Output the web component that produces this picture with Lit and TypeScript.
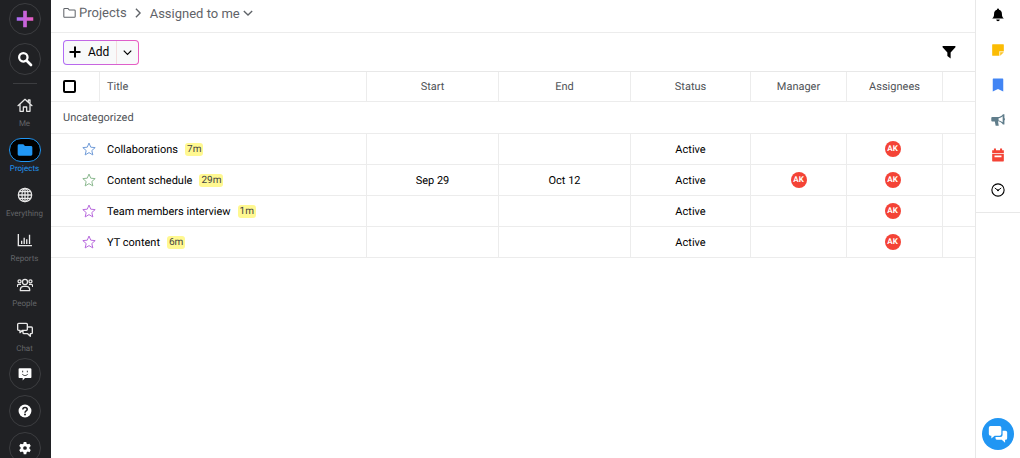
import { LitElement, html, css, svg, nothing, type TemplateResult } from "lit";
import { customElement, property } from "lit/decorators.js";
import { classMap } from "lit/directives/class-map.js";

const shapes: Record<string, TemplateResult> = {
  plus: svg`<defs><linearGradient id="pg" x1="0" x2="1" y1="0" y2="0"><stop offset="0" stop-color="#a66cf5"/><stop offset="1" stop-color="#ea5cc0"/></linearGradient></defs>
    <path fill="url(#pg)" d="M10 3h4v7h7v4h-7v7h-4v-7H3v-4h7z"/>`,
  add: svg`<path fill="currentColor" d="M10 1h4v9h9v4h-9v9h-4v-9H1v-4h9z"/>`,
  search: svg`<g fill="none" stroke="currentColor" stroke-width="3.400"><circle cx="9.500" cy="9.500" r="6.300"/><path stroke-width="4" stroke-linecap="round" d="M15 15l6 6"/></g>`,
  home: svg`<path fill="none" stroke="currentColor" stroke-width="1.900" stroke-linejoin="round" stroke-linecap="round" d="M1.500 13L12 3.500 22.500 13M4.500 11V21.500h5V15h5v6.500h5V11M17 7.500V4.500h2.500v5"/>`,
  folder: svg`<path fill="currentColor" d="M1 5.500a2 2 0 0 1 2-2h6.500l2.500 2.500H21a2 2 0 0 1 2 2V18.500a2 2 0 0 1-2 2H3a2 2 0 0 1-2-2z"/>`,
  folderLine: svg`<path fill="none" stroke="currentColor" stroke-width="1.900" stroke-linejoin="round" d="M1.500 5A1.500 1.500 0 0 1 3 3.500h6l2.500 3H21A1.500 1.500 0 0 1 22.500 8v10.500A1.500 1.500 0 0 1 21 20H3a1.500 1.500 0 0 1-1.500-1.500z"/>`,
  globe: svg`<g fill="none" stroke="currentColor" stroke-width="1.900"><circle cx="12" cy="12" r="10"/><ellipse cx="12" cy="12" rx="4.500" ry="10"/><path d="M12 2v20M2 12h20M3.500 7h17M3.500 17h17"/></g>`,
  chart: svg`<path fill="none" stroke="currentColor" stroke-width="2" d="M2 3v17.500h20.500M7 18v-5M10.800 18V8.500M14.600 18v-7M18.800 18V4"/>`,
  people: svg`<g fill="none" stroke="currentColor" stroke-width="1.900"><circle cx="12" cy="7.500" r="3.800"/><circle cx="3.800" cy="6.500" r="2.300"/><circle cx="20.200" cy="6.500" r="2.300"/><path stroke-linejoin="round" d="M5 20.500v-2a5 5 0 0 1 5-4.500h4a5 5 0 0 1 5 4.500v2zM.500 15v-1.500A2.500 2.500 0 0 1 3 11h3M23.500 15v-1.500A2.500 2.500 0 0 0 21 11h-3"/></g>`,
  chat: svg`<path fill="none" stroke="currentColor" stroke-width="2" stroke-linejoin="round" d="M2.500 2H14a1.500 1.500 0 0 1 1.500 1.500V11a1.500 1.500 0 0 1-1.500 1.500H8L4.500 16v-3.500h-2A1.500 1.500 0 0 1 1 11V3.500A1.500 1.500 0 0 1 2.500 2zM15.500 7.500h6A1.500 1.500 0 0 1 23 9v7a1.500 1.500 0 0 1-1.500 1.500H20V21.500l-4-4h-5.500A1.500 1.500 0 0 1 9 16v-3.500"/>`,
  feedback: svg`<path fill="currentColor" d="M3 2h18a2 2 0 0 1 2 2v13a2 2 0 0 1-2 2H12l-4 4v-4H3a2 2 0 0 1-2-2V4a2 2 0 0 1 2-2z"/><path fill="none" stroke="#202124" stroke-width="1.500" stroke-linecap="round" d="M8 7v1.500M16 7v1.500M7.500 12.500c2 3 7 3 9 0"/>`,
  help: svg`<circle cx="12" cy="12" r="11" fill="currentColor"/><path fill="none" stroke="#202124" stroke-width="2.700" d="M8.300 9.500c0-5 7.500-4.500 7.500-.5 0 2.800-3.800 2.700-3.800 5.800"/><circle cx="12" cy="18" r="1.700" fill="#202124"/>`,
  gear: svg`<path fill="currentColor" d="M9.800 1.500h4.400l.6 3 2 1.200 2.900-1 2.200 3.800-2.300 2v2.900l2.300 2-2.200 3.800-2.900-1-2 1.200-.6 3.100H9.800l-.6-3.100-2-1.200-2.900 1-2.200-3.800 2.300-2v-2.900l-2.300-2 2.200-3.800 2.900 1 2-1.200z"/><circle cx="12" cy="12" r="3.200" fill="#202124"/>`,
  right: svg`<path fill="none" stroke="currentColor" stroke-width="3.200" d="M7 2l10 10L7 22"/>`,
  down: svg`<path fill="none" stroke="currentColor" stroke-width="3.200" d="M2 7l10 10L22 7"/>`,
  filter: svg`<path fill="currentColor" d="M1 1.500h22v2.500L14.800 13v10L9.200 19v-6L1 4z"/>`,
  star: svg`<path fill="none" stroke="currentColor" stroke-width="1.700" stroke-linejoin="round" d="M12 1.800l3 7.100 7.600.7-5.800 5.100 1.800 7.500-6.600-4-6.600 4 1.800-7.500-5.800-5.100 7.600-.7z"/>`,
  bell: svg`<path fill="currentColor" d="M12 1a1.800 1.800 0 0 1 1.800 1.800c3.200.8 4.900 3.400 4.900 6.900 0 4.500 1.300 6 3.300 8.300H2c2-2.300 3.300-3.800 3.300-8.300 0-3.500 1.700-6.100 4.900-6.900A1.800 1.800 0 0 1 12 1zM9 19.500h6a3 3 0 0 1-6 0z"/>`,
  note: svg`<path fill="currentColor" d="M3 2h18a1 1 0 0 1 1 1v11.500L14.500 22H3a1 1 0 0 1-1-1V3a1 1 0 0 1 1-1z"/><path fill="#fff" opacity=".8" d="M14 14h8v1.500L15.500 22H14z"/><path fill="#fbc52c" d="M15.800 15.800H22L15.800 22z"/>`,
  bookmark: svg`<path fill="currentColor" d="M4 1h16a1 1 0 0 1 1 1v21l-9-4-9 4V2a1 1 0 0 1 1-1z"/>`,
  horn: svg`<path fill="currentColor" fill-rule="evenodd" d="M2 7h9c4 0 7.500-2 9.500-5H23v6.500c1.300.6 1.300 3.900 0 4.500v6.500h-2.500c-2-2.800-5.500-5-8.500-5.300L13.300 22H8l-1.500-7.500H2A1.500 1.500 0 0 1 .500 13V8.500A1.500 1.500 0 0 1 2 7zM13 9v4c3 .4 5 1.500 7 3V5.500C18 7.500 16 8.600 13 9z"/>`,
  calendar: svg`<path fill="currentColor" fill-rule="evenodd" d="M5 1h3.500v3h7V1H19v3h3v4.500H2V4h3zM2 10h20V22a1 1 0 0 1-1 1H3a1 1 0 0 1-1-1zM6 13v3h12v-3z"/>`,
  clock: svg`<circle cx="12" cy="12" r="10.500" fill="none" stroke="currentColor" stroke-width="1.900"/><path fill="none" stroke="currentColor" stroke-width="1.600" d="M6.500 8.500l5.500 4.300 5.500-4.300"/><circle cx="12" cy="12.500" r="1.600" fill="currentColor"/>`,
  chatSolid: svg`<path fill="currentColor" d="M3 2.500h11a2 2 0 0 1 2 2V12a2 2 0 0 1-2 2H8l-4 3.500V14H3a2 2 0 0 1-2-2V4.500a2 2 0 0 1 2-2z"/><path fill="currentColor" d="M17.500 8H21a2 2 0 0 1 2 2v7a2 2 0 0 1-2 2h-.5v3.500l-4-3.500H11a2 2 0 0 1-2-2v-1.500h5.500a3 3 0 0 0 3-3z"/>`,
};

@customElement("ui-icon")
class UiIcon extends LitElement {
  @property() name = "";
  static styles = css`
    :host { display: block; flex: none; width: 16px; height: 16px; }
    svg { display: block; width: 100%; height: 100%; }
  `;
  render() {
    return html`<svg viewBox="0 0 24 24" aria-hidden="true">${shapes[this.name] ?? nothing}</svg>`;
  }
}

@customElement("side-nav")
class SideNav extends LitElement {
  static styles = css`
    :host { display: block; overflow: hidden; background: #202124; color: #fff; }
    .bar { display: flex; flex-direction: column; align-items: center; padding: 3px 2px 0 0; }
    button { padding: 0; border: 0; background: none; color: inherit; font: inherit; cursor: pointer; }
    .round { display: grid; place-items: center; flex: none; box-sizing: border-box; width: 32px; height: 32px; border: 1px solid #3c3d40; border-radius: 50%; }
    .top, .bottom { display: flex; flex-direction: column; }
    .top { gap: 8px; }
    .bottom { gap: 5px; margin-top: 3px; }
    .create { width: 22px; height: 22px; }
    .find { width: 16px; height: 16px; }
    .small { width: 14px; height: 14px; }
    .rule { width: 24px; height: 1px; margin: 8px 0 9px; border: 0; background: #3c3d40; }
    nav { display: flex; flex-direction: column; gap: 8px; }
    .item { display: flex; flex-direction: column; align-items: center; gap: 1px; color: #636568; font-size: 8px; line-height: 12px; text-decoration: none; }
    .pill { display: grid; place-items: center; box-sizing: border-box; width: 32px; height: 24px; border-radius: 12px; color: #e8e8e8; }
    .active { color: #2196f3; }
    .active .pill { border: 1px solid #2196f3; background: #000; color: #2196f3; }
  `;
  items = [
    ["home", "Me"], ["folder", "Projects"], ["globe", "Everything"],
    ["chart", "Reports"], ["people", "People"], ["chat", "Chat"],
  ];
  render() {
    return html`<div class="bar">
      <div class="top">
        <button class="round" aria-label="Create"><ui-icon class="create" name="plus"></ui-icon></button>
        <button class="round" aria-label="Search"><ui-icon class="find" name="search"></ui-icon></button>
      </div>
      <hr class="rule" />
      <nav>
        ${this.items.map(([icon, label]) => html`
          <a href="#" class=${classMap({ item: true, active: label === "Projects" })}>
            <span class="pill"><ui-icon name=${icon}></ui-icon></span><span>${label}</span>
          </a>`)}
      </nav>
      <div class="bottom">
        <button class="round" aria-label="Feedback"><ui-icon class="small" name="feedback"></ui-icon></button>
        <button class="round" aria-label="Help"><ui-icon class="small" name="help"></ui-icon></button>
        <button class="round" aria-label="Settings"><ui-icon class="small" name="gear"></ui-icon></button>
      </div>
    </div>`;
  }
}

@customElement("tool-rail")
class ToolRail extends LitElement {
  static styles = css`
    :host { display: flex; flex-direction: column; border-left: 1px solid #e8e8e8; }
    .tools { display: flex; flex-direction: column; align-items: center; gap: 21px; padding: 8px 0 15px; border-bottom: 1px solid #e8e8e8; }
    button { padding: 0; border: 0; background: none; color: #000; cursor: pointer; }
    .tool ui-icon { width: 14px; height: 14px; }
    .note { color: #fbbc04; }
    .bookmark { color: #4285f4; }
    .horn { color: #607d8b; }
    .calendar { color: #f44336; }
    .help { display: grid; place-items: center; width: 32px; height: 32px; margin: auto auto 8px; border-radius: 50%; background: #2196f3; color: #fff; }
    .help ui-icon { width: 20px; height: 20px; }
  `;
  tools = ["bell", "note", "bookmark", "horn", "calendar", "clock"];
  render() {
    return html`
      <div class="tools">
        ${this.tools.map((t) => html`<button class="tool ${t}" aria-label=${t}><ui-icon name=${t}></ui-icon></button>`)}
      </div>
      <button class="help" aria-label="Support chat"><ui-icon name="chatSolid"></ui-icon></button>`;
  }
}

interface Project {
  title: string;
  age: string;
  tone: string;
  start?: string;
  end?: string;
  manager?: string;
}

@customElement("project-table")
class ProjectTable extends LitElement {
  static styles = css`
    :host { display: block; }
    table { width: 100%; table-layout: fixed; border-collapse: separate; border-spacing: 0; font-size: 11px; color: #000; }
    .pick { width: 49px; }
    .date { width: 132px; }
    .status { width: 120px; }
    .person { width: 96px; }
    .rest { width: 32px; }
    th, td { box-sizing: border-box; height: 31px; padding: 0; border-bottom: 1px solid #ececec; border-right: 1px solid #ececec; text-align: center; white-space: nowrap; }
    th { height: 30px; color: #505357; font-weight: 400; }
    th:last-child, td:last-child, td.fav, .group th { border-right: 0; }
    .group th { height: 32px; padding-left: 12px; text-align: left; }
    th.name, td.name { padding-left: 7px; text-align: left; }
    .line { display: flex; align-items: center; gap: 7px; }
    .age { padding: 0 2px; border-radius: 3px; background: #fff891; color: #444; font-size: 10px; line-height: 13px; }
    input { display: block; appearance: none; box-sizing: border-box; width: 13px; height: 13px; margin: 0 0 0 12px; border: 2px solid #000; border-radius: 2px; background: #fff; }
    .star { display: block; margin: 0 0 0 31px; padding: 0; border: 0; background: none; cursor: pointer; }
    .star ui-icon { width: 14px; height: 14px; }
    .blue { color: #6f9bd8; }
    .green { color: #8bb88f; }
    .purple { color: #b768dd; }
    .team { padding-right: 4px; }
    .avatar { display: block; width: 16px; margin: auto; border-radius: 50%; background: #f44336; color: #fff; font-size: 8px; font-weight: 700; line-height: 16px; }
  `;
  projects: Project[] = [
    { title: "Collaborations", age: "7m", tone: "blue" },
    { title: "Content schedule", age: "29m", tone: "green", start: "Sep 29", end: "Oct 12", manager: "AK" },
    { title: "Team members interview", age: "1m", tone: "purple" },
    { title: "YT content", age: "6m", tone: "purple" },
  ];
  avatar(name?: string) {
    return name ? html`<span class="avatar">${name}</span>` : nothing;
  }
  render() {
    return html`<table>
      <colgroup>
        <col class="pick" /><col /><col class="date" /><col class="date" /><col class="status" />
        <col class="person" /><col class="person" /><col class="rest" />
      </colgroup>
      <thead>
        <tr>
          <th><input type="checkbox" aria-label="Select all" /></th>
          <th class="name">Title</th><th>Start</th><th>End</th><th>Status</th><th>Manager</th><th>Assignees</th><th></th>
        </tr>
      </thead>
      <tbody>
        <tr class="group"><th colspan="8" scope="rowgroup">Uncategorized</th></tr>
        ${this.projects.map((p) => html`<tr>
          <td class="fav"><button class="star ${p.tone}" aria-label="Favourite ${p.title}"><ui-icon name="star"></ui-icon></button></td>
          <td class="name"><div class="line"><span>${p.title}</span><span class="age">${p.age}</span></div></td>
          <td>${p.start}</td><td>${p.end}</td><td>Active</td>
          <td>${this.avatar(p.manager)}</td><td class="team">${this.avatar("AK")}</td><td></td>
        </tr>`)}
      </tbody>
    </table>`;
  }
}

@customElement("app-root")
class AppRoot extends LitElement {
  static styles = css`
    :host { display: grid; grid-template-columns: 51px minmax(0, 1fr) 45px; height: 100vh; background: #fff; color: #000; font-family: Roboto, sans-serif; text-rendering: geometricPrecision; }
    button { padding: 0; border: 0; background: none; color: inherit; font: inherit; cursor: pointer; }
    header { display: flex; align-items: center; box-sizing: border-box; height: 33px; padding: 0 12px 6px; border-bottom: 1px solid #ececec; color: #5f6368; font-size: 13px; }
    .crumb { display: flex; align-items: center; gap: 3px; color: inherit; text-decoration: none; }
    .folder { width: 13px; height: 14px; }
    .sep { width: 10px; height: 10px; margin: 0 7px 0 6px; }
    .caret { width: 10px; height: 10px; }
    .toolbar { display: flex; align-items: center; justify-content: space-between; box-sizing: border-box; height: 39px; padding: 0 19px 0 12px; border-bottom: 1px solid #e8e8e8; }
    .split { display: flex; box-sizing: border-box; height: 25px; border: 1px solid transparent; border-radius: 4px; background: linear-gradient(#f8f9fa, #f8f9fa) padding-box, linear-gradient(90deg, #b06cf5, #e95cc0) border-box; }
    .add { display: flex; align-items: center; gap: 7px; padding: 0 7px 0 5px; border-right: 1px solid #f3dede; font-size: 12px; }
    .add ui-icon { width: 12px; height: 12px; }
    .more { display: grid; place-items: center; width: 21px; }
    .more ui-icon { width: 9px; height: 9px; }
    .filter { width: 14px; height: 14px; }
  `;
  render() {
    return html`
      <side-nav></side-nav>
      <main>
        <header>
          <a class="crumb" href="#"><ui-icon class="folder" name="folderLine"></ui-icon>Projects</a>
          <ui-icon class="sep" name="right"></ui-icon>
          <button class="crumb">Assigned to me<ui-icon class="caret" name="down"></ui-icon></button>
        </header>
        <div class="toolbar">
          <div class="split">
            <button class="add"><ui-icon name="add"></ui-icon>Add</button>
            <button class="more" aria-label="More options"><ui-icon name="down"></ui-icon></button>
          </div>
          <button aria-label="Filter"><ui-icon class="filter" name="filter"></ui-icon></button>
        </div>
        <project-table></project-table>
      </main>
      <tool-rail></tool-rail>`;
  }
}
